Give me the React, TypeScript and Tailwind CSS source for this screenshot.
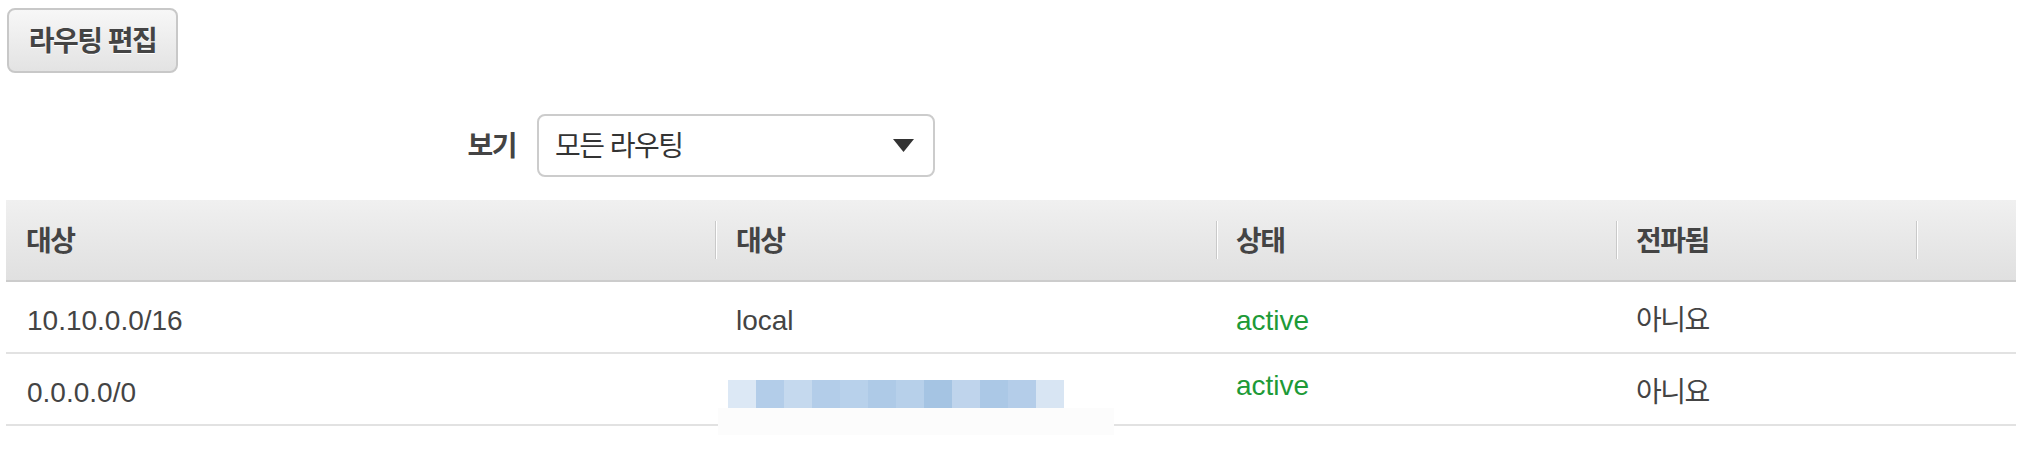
import React from "react";

const ko = "tracking-[-1.5px]";

const redacted = [
  "#dce8f5",
  "#b3cde9",
  "#c5d9ee",
  "#b3cde9",
  "#b8d1eb",
  "#aecae7",
  "#b7d0ea",
  "#a5c4e3",
  "#bfd4ec",
  "#abc8e6",
  "#b4cde9",
  "#d8e5f3",
];

function Sep() {
  return (
    <span className="h-[38px] w-[2px] shrink-0 border-l border-r border-l-[#c9c9c9] border-r-white" />
  );
}

export default function App() {
  return (
    <div className="min-h-[464px] bg-white pl-[6px] pr-[8px] pt-2 font-['Liberation_Sans','Noto_Sans_CJK_KR',sans-serif] text-[28px] leading-[32px] text-[#444]">
      <button className="ml-px flex h-[65px] w-[171px] items-center justify-center rounded-lg border-2 border-[#c8c8c8] bg-linear-to-b from-[#f7f7f7] to-[#e3e3e3] pt-[3px] font-bold text-[#444] [text-shadow:0_1px_0_#fff]">
        <span className={ko}>라우팅 편집</span>
      </button>

      <div className="mt-[41px] flex h-[63px] items-center">
        <div className={`w-[510px] pt-[3px] text-right font-bold ${ko}`}>보기</div>
        <div className="ml-[21px] flex h-[63px] w-[398px] items-center justify-between rounded-lg border-2 border-[#cccccc] pl-[16px] pr-[19px]">
          <span className={`pt-[3px] text-[#333] ${ko}`}>모든 라우팅</span>
          <svg width="21" height="13" viewBox="0 0 21 13">
            <path d="M0 0 H21 L10.5 13 Z" fill="#333" />
          </svg>
        </div>
      </div>

      <div className="mt-[23px]">
        <div className="grid h-[82px] grid-cols-[709px_501px_400px_300px_1fr] border-b-2 border-[#cccccc] bg-linear-to-b from-[#f0f0f0] to-[#e0e0e0] font-bold">
          <div className="flex items-center pl-5 pt-1">
            <span className={ko}>대상</span>
          </div>
          <div className="flex items-center">
            <Sep />
            <span className={`pl-[19px] pt-1 ${ko}`}>대상</span>
          </div>
          <div className="flex items-center">
            <Sep />
            <span className={`pl-[18px] pt-1 ${ko}`}>상태</span>
          </div>
          <div className="flex items-center">
            <Sep />
            <span className={`pl-[18px] pt-1 ${ko}`}>전파됨</span>
          </div>
          <div className="flex items-center">
            <Sep />
          </div>
        </div>

        <div className="grid h-[72px] grid-cols-[709px_501px_400px_300px_1fr] border-b-2 border-[#e2e2e2]">
          <div className="pl-[21px] pt-[23px]">10.10.0.0/16</div>
          <div className="pl-[21px] pt-[23px]">local</div>
          <div className="pl-[20px] pt-[23px] text-[#1d9a37]">active</div>
          <div className="pl-[20px] pt-[23px]">
            <span className={ko}>아니요</span>
          </div>
          <div />
        </div>

        <div className="grid h-[72px] grid-cols-[709px_501px_400px_300px_1fr] border-b-2 border-[#e2e2e2]">
          <div className="pl-[21px] pt-[23px]">0.0.0.0/0</div>
          <div className="relative">
            <div className="absolute left-[13px] top-[26px] flex h-[28px]">
              {redacted.map((c, i) => (
                <span key={i} className="h-[28px] w-[28px]" style={{ backgroundColor: c }} />
              ))}
            </div>
            <div className="absolute left-[3px] top-[54px] h-[27px] w-[396px] bg-[#fcfcfc]" />
          </div>
          <div className="pl-[20px] pt-[16px] text-[#1d9a37]">active</div>
          <div className="pl-[20px] pt-[23px]">
            <span className={ko}>아니요</span>
          </div>
          <div />
        </div>
      </div>
    </div>
  );
}
